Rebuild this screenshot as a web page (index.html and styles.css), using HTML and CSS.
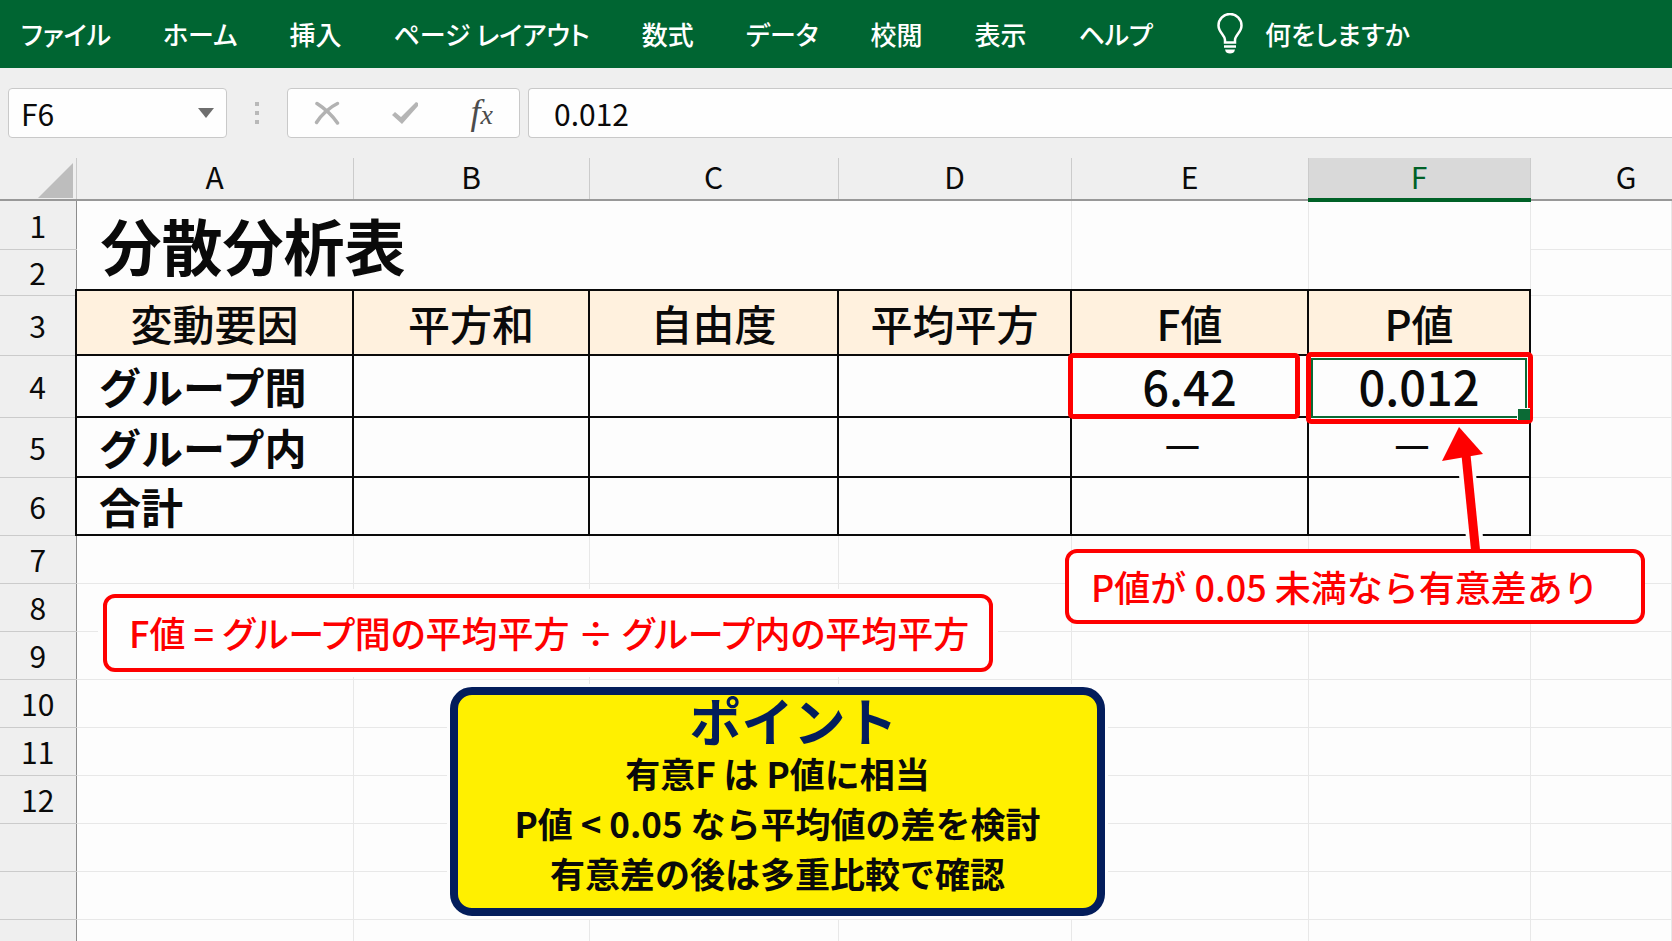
FILE: index.html
```html
<!DOCTYPE html>
<html lang="ja">
<head>
  <meta charset="utf-8">
  <title>分散分析表</title>
  <link rel="stylesheet" href="styles.css">
</head>
<body>
  <nav class="ribbon">
    <button class="tab">ファイル</button>
    <button class="tab">ホーム</button>
    <button class="tab">挿入</button>
    <button class="tab">ページ レイアウト</button>
    <button class="tab">数式</button>
    <button class="tab">データ</button>
    <button class="tab">校閲</button>
    <button class="tab">表示</button>
    <button class="tab">ヘルプ</button>
    <button class="tab tell-me">
      <svg width="26" height="42" viewBox="0 0 26 42" fill="none" stroke="#fff" stroke-width="2.500">
        <path d="M8 29.500V27C8 22 1.500 19.500 1.500 12.500a11.500 11.500 0 0 1 23 0C24.500 19.500 18 22 18 27v2.500z"/>
        <path d="M7 33.500h12" stroke-width="2.500"/>
        <path d="M8 36.500h10c-.5 3-2.500 4-5 4s-4.500-1-5-4z" fill="#fff" stroke="none"/>
      </svg>
      <span>何をしますか</span>
    </button>
  </nav>

  <div class="formula-bar">
    <div class="box name-box">
      <input type="text" value="F6" aria-label="名前ボックス">
      <button class="icon-btn" aria-label="名前の一覧">
        <svg width="16" height="10" viewBox="0 0 16 10"><path d="M0 0h16L8 10z" fill="#6e6e6e"/></svg>
      </button>
    </div>
    <div class="dots"><i></i><i></i><i></i></div>
    <div class="box tools">
      <button class="icon-btn" aria-label="キャンセル">
        <svg width="26" height="24" viewBox="0 0 26 24" fill="none" stroke="#b2b2b2" stroke-linecap="round">
          <path d="M3 2.500C10 7 18 14 23.500 22" stroke-width="3.500"/>
          <path d="M23.500 2.500C16 6 7 14 2.500 21.500" stroke-width="3.500"/>
        </svg>
      </button>
      <button class="icon-btn" aria-label="入力">
        <svg width="28" height="24" viewBox="0 0 28 24"><path d="M1 14l3-3 6 5L25 1l2 1v3L11 23z" fill="#b5b5b5"/></svg>
      </button>
      <button class="icon-btn fx" aria-label="関数の挿入"><span class="f">f</span><span class="x">x</span></button>
    </div>
    <input class="box formula" type="text" value="0.012" aria-label="数式バー">
  </div>

  <main class="sheet">
    <table class="grid">
      <colgroup>
        <col class="col-head"><col class="col-a"><col class="col-b"><col class="col-c">
        <col class="col-d"><col class="col-e"><col class="col-f"><col>
      </colgroup>
      <thead>
        <tr>
          <th class="corner"><svg width="35" height="35" viewBox="0 0 35 35"><path d="M35 0v35H0z" fill="#bdbdbd"/></svg></th>
          <th>A</th><th>B</th><th>C</th><th>D</th><th>E</th>
          <th class="active">F</th>
          <th class="last">G</th>
        </tr>
      </thead>
      <tbody>
        <tr class="r1">
          <th>1</th>
          <td class="title" colspan="4" rowspan="2">分散分析表</td>
          <td rowspan="2"></td><td rowspan="2"></td><td></td>
        </tr>
        <!-- row 2 is split so that the table can start just above the row 3 line -->
        <tr class="r2">
          <th rowspan="2">2</th>
          <td rowspan="2"></td>
        </tr>
        <tr class="r2-end">
          <td class="head" rowspan="2">変動要因</td>
          <td class="head" rowspan="2">平方和</td>
          <td class="head" rowspan="2">自由度</td>
          <td class="head" rowspan="2">平均平方</td>
          <td class="head" rowspan="2">F値</td>
          <td class="head" rowspan="2">P値</td>
        </tr>
        <tr class="r3">
          <th>3</th>
          <td></td>
        </tr>
        <tr class="r4">
          <th>4</th>
          <td class="cell label">グループ間</td>
          <td class="cell"></td><td class="cell"></td><td class="cell"></td>
          <td class="cell num">6.42<div class="mark mark-f"></div></td>
          <td class="cell num">0.012<div class="mark mark-p"><div class="selection"></div></div></td>
          <td></td>
        </tr>
        <tr class="r5">
          <th>5</th>
          <td class="cell label">グループ内</td>
          <td class="cell"></td><td class="cell"></td><td class="cell"></td>
          <td class="cell dash">—</td>
          <td class="cell dash">—</td>
          <td></td>
        </tr>
        <tr class="r6">
          <th>6</th>
          <td class="cell label">合計</td>
          <td class="cell"></td><td class="cell"></td><td class="cell"></td><td class="cell"></td><td class="cell"></td>
          <td></td>
        </tr>
        <tr><th>7</th><td></td><td></td><td></td><td></td><td></td><td></td><td></td></tr>
        <tr><th>8</th><td></td><td></td><td></td><td></td><td></td><td></td><td></td></tr>
        <tr><th>9</th><td></td><td></td><td></td><td></td><td></td><td></td><td></td></tr>
        <tr><th>10</th><td></td><td></td><td></td><td></td><td></td><td></td><td></td></tr>
        <tr><th>11</th><td></td><td></td><td></td><td></td><td></td><td></td><td></td></tr>
        <tr><th>12</th><td></td><td></td><td></td><td></td><td></td><td></td><td></td></tr>
        <tr><th></th><td></td><td></td><td></td><td></td><td></td><td></td><td></td></tr>
        <tr><th></th><td></td><td></td><td></td><td></td><td></td><td></td><td></td></tr>
        <tr><th></th><td></td><td></td><td></td><td></td><td></td><td></td><td></td></tr>
      </tbody>
    </table>

    <svg class="arrow" width="60" height="130" viewBox="0 0 60 130">
      <path d="M29 36L39 126" stroke="#fdfdfd" stroke-width="17"/>
      <path d="M29 30L39 130" stroke="#fe0000" stroke-width="9"/>
      <path d="M22 2L46 29L5 36z" fill="#fe0000"/>
    </svg>
    <div class="callout callout-p">P値が 0.05 未満なら有意差あり</div>
    <div class="callout callout-f">F値 = グループ間の平均平方 ÷ グループ内の平均平方</div>

    <section class="point">
      <h2>ポイント</h2>
      <p>有意F は P値に相当</p>
      <p>P値 &lt; 0.05 なら平均値の差を検討</p>
      <p>有意差の後は多重比較で確認</p>
    </section>
  </main>
</body>
</html>
```
FILE: styles.css
```css
* {
  box-sizing: border-box;
}

body {
  margin: 0;
  height: 100vh;
  display: flex;
  flex-direction: column;
  overflow: hidden;
  background: #efefef;
  color: #0a0a0a;
  font-family: "Noto Sans CJK JP", sans-serif;
  font-size: 30px;
}

button,
input {
  font: inherit;
  color: inherit;
  border: none;
  background: none;
  padding: 0;
}

.ribbon {
  display: flex;
  align-items: center;
  gap: 52px;
  height: 68px;
  flex: none;
  padding-left: 21px;
  background: #006532;
  color: #fff;
}

.tab {
  font-size: 26px;
  font-weight: 500;
  line-height: 40px;
  font-feature-settings: "palt";
  white-space: nowrap;
}

.tell-me {
  display: flex;
  align-items: center;
  gap: 22px;
  margin-left: 12px;
}

/* formula bar */
.formula-bar {
  display: flex;
  align-items: center;
  height: 90px;
  flex: none;
  padding-left: 8px;
}

.box {
  height: 50px;
  border: 1px solid #c9c9c9;
  border-radius: 4px;
  background: #fefefe;
}

.name-box {
  display: flex;
  align-items: center;
  justify-content: space-between;
  width: 219px;
  padding: 0 12px;
}

.name-box input {
  width: 120px;
}

.icon-btn {
  display: flex;
  align-items: center;
}

.dots {
  display: flex;
  flex-direction: column;
  align-items: center;
  gap: 5px;
  width: 60px;
}

.dots i {
  width: 4px;
  height: 4px;
  background: #b8b8b8;
}

.tools {
  display: flex;
  align-items: center;
  justify-content: space-between;
  width: 233px;
  padding: 0 26px;
  margin-right: 8px;
}

.fx {
  align-items: baseline;
  font-family: "Liberation Serif", serif;
  font-style: italic;
  line-height: 36px;
  color: #4c4c4c;
}

.fx .f {
  font-size: 36px;
}

.fx .x {
  font-size: 28px;
}

.formula {
  flex: 1;
  min-width: 0;
  padding-left: 25px;
  border-right: none;
  border-radius: 4px 0 0 4px;
}

/* sheet */
.sheet {
  position: relative;
  flex: 1;
  min-height: 0;
}

.grid {
  width: 100%;
  table-layout: fixed;
  border-collapse: collapse;
  background: #fdfdfd;
}

.col-head { width: 76px; }
.col-a { width: 277px; }
.col-b { width: 236px; }
.col-c { width: 249px; }
.col-d { width: 233px; }
.col-e { width: 237px; }
.col-f { width: 222px; }

.grid th,
.grid td {
  height: 48px;
  padding: 0;
  border: 1px solid #e8e8e8;
  line-height: 40px;
}

.grid th {
  background: #efefef;
  font-weight: 400;
  border-color: #cbcbcb;
}

.grid tbody th {
  border-left: none;
  border-right: 1px solid #8c8c8c;
}

.grid thead th {
  height: 42px;
  padding-bottom: 5px;
  border-top: none;
  border-bottom: 2px solid #989898;
  line-height: 34px;
}

.grid thead .corner {
  border-left: none;
  padding: 4px 3px 0 0;
  text-align: right;
  line-height: 0;
}

.grid thead .active {
  background: #d9d9d9;
  color: #006127;
  border-bottom: 4px solid #006127;
}

.grid thead .last {
  border-right: none;
  padding-left: 50px;
}

.grid .r1 > * { height: 49px; }
.grid .r2 { height: 41px; }
.grid .r2-end { height: 5px; }
.grid .r3 > * { height: 60px; }
.grid .r4 > * { height: 62px; }
.grid .r5 > * { height: 60px; }
.grid .r6 > * { height: 58px; }
.grid .r2 > *,
.grid .r2-end > * { height: auto; }

.grid .title {
  padding-left: 24px;
  border-left: 1px solid #8c8c8c;
  font-size: 61px;
  font-weight: 700;
  line-height: 64px;
}

.grid .head {
  background: #fff1de;
  border: 2px solid #0a0a0a;
  text-align: center;
  font-size: 42px;
  font-weight: 500;
  line-height: 48px;
}

.grid .cell {
  position: relative;
  border: 2px solid #0a0a0a;
  font-size: 42px;
  font-weight: 700;
  line-height: 48px;
}

.grid .label {
  padding-left: 22px;
}

.grid .num {
  text-align: center;
  font-size: 47px;
  font-weight: 500;
}

.grid .dash {
  padding: 0 14px 10px 0;
  text-align: center;
  font-size: 40px;
  font-weight: 500;
  line-height: 44px;
}

.mark {
  position: absolute;
  border: 5px solid #fe0000;
  border-radius: 5px;
}

.mark-f {
  inset: -3px 7px -3px -4px;
}

.mark-p {
  inset: -4px -4px -8px -3px;
}

.selection {
  position: absolute;
  inset: 1px 1px 1px 0;
  border: 2px solid #0b6a35;
}

.selection::after {
  content: "";
  position: absolute;
  right: -5px;
  bottom: -4px;
  width: 12px;
  height: 11px;
  border: solid #fdfdfd;
  border-width: 1px 0 0 1px;
  background: #0b6a35;
}

/* notes over the sheet */
.arrow {
  position: absolute;
  left: 1437px;
  top: 267px;
}

.callout {
  position: absolute;
  border: 4px solid #fe0000;
  border-radius: 12px;
  background: #fefefe;
  box-shadow: 0 0 0 5px #fdfdfd;
  color: #fe0000;
  font-size: 36px;
  font-weight: 500;
  white-space: nowrap;
}

.callout-p {
  left: 1065px;
  top: 391px;
  height: 75px;
  width: 580px;
  padding: 0 22px;
  line-height: 66px;
  box-shadow: none;
}

.callout-f {
  left: 103px;
  top: 436px;
  height: 78px;
  width: 890px;
  padding: 0 22px;
  line-height: 68px;
  font-feature-settings: "palt";
}

.point {
  position: absolute;
  left: 450px;
  top: 529px;
  width: 655px;
  height: 229px;
  border: 8px solid #031d5b;
  border-radius: 22px;
  background: #fff000;
  box-shadow: 0 0 0 3px #fdfdfd;
  text-align: center;
}

.point h2 {
  margin: 0 0 3px;
  padding-left: 32px;
  color: #031d5b;
  font-size: 52px;
  font-weight: 700;
  line-height: 50px;
}

.point p {
  margin: 0;
  font-size: 35px;
  font-weight: 700;
  line-height: 50px;
}
```
